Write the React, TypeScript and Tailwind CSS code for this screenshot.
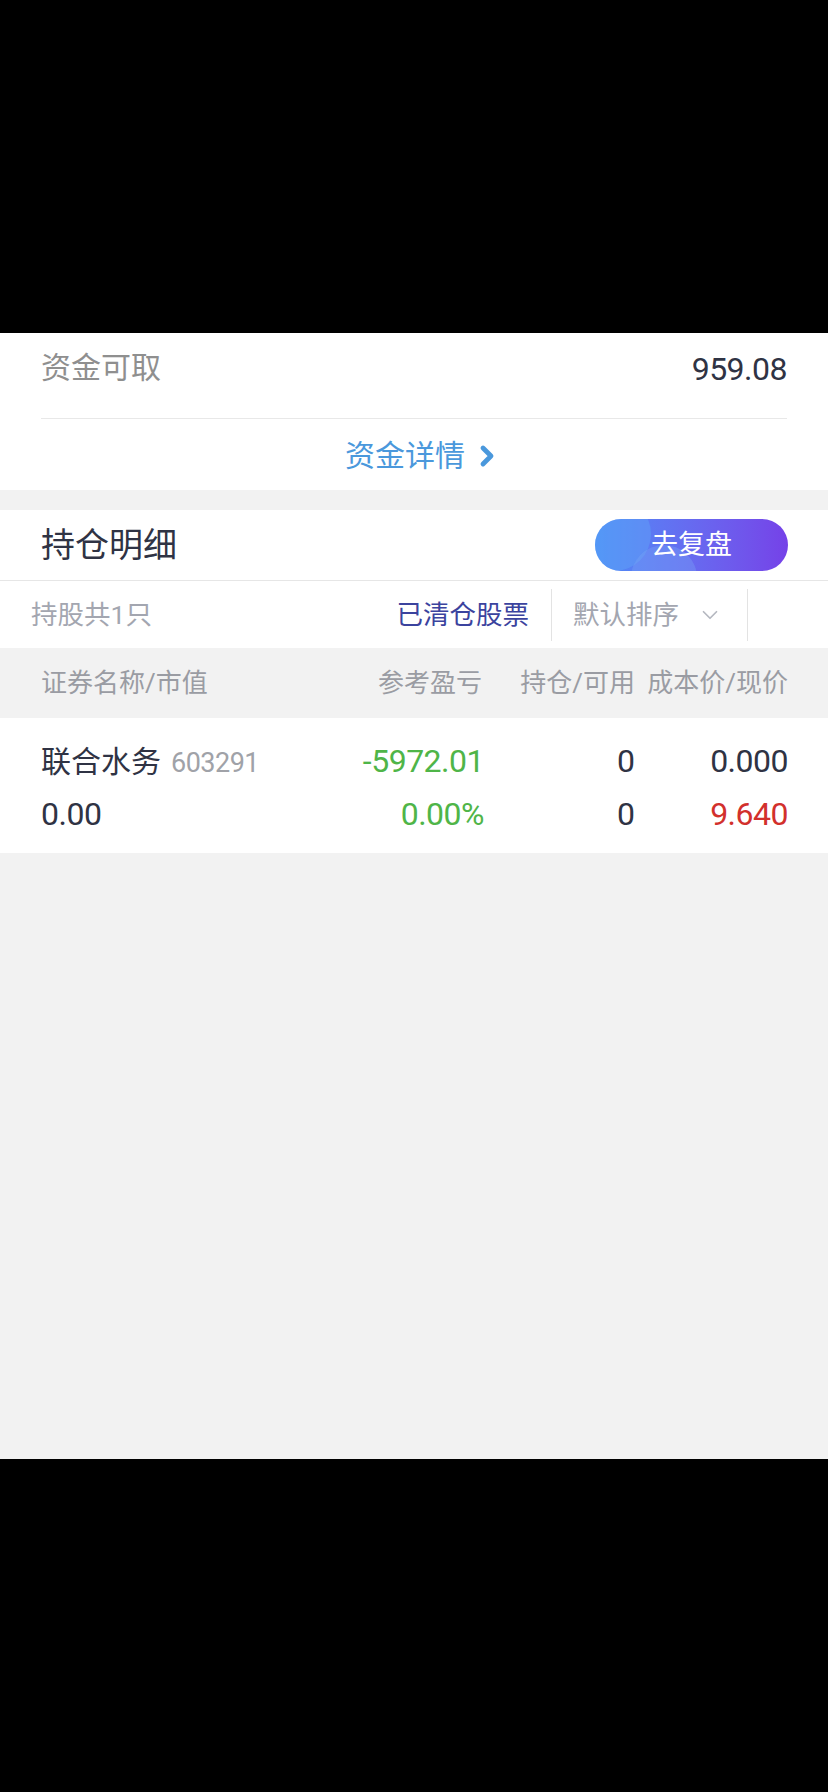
import { ChevronRight, ChevronDown } from 'lucide-react';

const FONT = { fontFamily: '"Roboto", "Noto Sans CJK SC", sans-serif' };

export default function App() {
  return (
    <div className="w-[828px] h-[1792px] bg-black flex flex-col" style={FONT}>
      <div className="h-[333px] shrink-0 bg-black" />

      <main className="h-[1126px] shrink-0 bg-[#f2f2f2] flex flex-col">
        {/* funds */}
        <section className="bg-white px-[41px]">
          <div className="h-[86px] flex items-start pt-[12px] justify-between border-b border-[#e8e8e8]">
            <span className="text-[30px] text-[#8f8f8f]">资金可取</span>
            <span className="text-[32px] text-[#2f3344] tracking-[-0.5px]">959.08</span>
          </div>
          <div className="h-[71px] flex items-center justify-center text-[#4a98dc] pt-[2px] pl-[20px]">
            <span className="text-[30px]">资金详情</span>
            <ChevronRight size={32} strokeWidth={3.6} className="ml-[6px]" />
          </div>
        </section>

        {/* holdings header */}
        <section className="mt-[20px] bg-white">
          <div className="h-[71px] pl-[41px] pr-[40px] flex items-center justify-between border-b border-[#e6e6e6]">
            <h2 className="text-[34px] text-[#2f3344]">持仓明细</h2>
            <button className="relative overflow-hidden w-[193px] h-[52px] rounded-full bg-gradient-to-r from-[#4a8cf7] to-[#7541e8] text-white text-[27px]">
              <span className="absolute -left-[18px] -top-[22px] w-[74px] h-[74px] rounded-full bg-[#62a9f8] opacity-40" />
              <span className="absolute left-[36px] top-[26px] w-[66px] h-[66px] rounded-full bg-[#7aa6f7] opacity-35" />
              <span className="relative">去复盘</span>
            </button>
          </div>

          <div className="h-[67px] flex items-center pl-[31px]">
            <span className="text-[26.5px] text-[#a3a6b0] flex-1">持股共1只</span>
            <span className="text-[26.5px] text-[#3b439e] pr-[22px]">已清仓股票</span>
            <div className="w-px h-[52px] bg-[#e3e3e3]" />
            <div className="w-[195px] flex items-center pl-[21px] text-[#a3a6b0]">
              <span className="text-[26.5px]">默认排序</span>
              <ChevronDown size={26} strokeWidth={1.6} className="ml-[18px] text-[#b5b8c0]" />
            </div>
            <div className="w-px h-[52px] bg-[#e3e3e3]" />
            <div className="w-[80px]" />
          </div>
        </section>

        {/* table header */}
        <div className="h-[70px] flex items-center pl-[41px] pr-[40px] text-[26px] text-[#9a9ca3]">
          <span className="flex-1">证券名称/市值</span>
          <span className="w-[110px] text-right">参考盈亏</span>
          <span className="w-[153px] text-right">持仓/可用</span>
          <span className="w-[153px] text-right">成本价/现价</span>
        </div>

        {/* row */}
        <div className="h-[135px] bg-white pl-[41px] pr-[40px] flex flex-col justify-center gap-[13px] pt-[4px]">
          <div className="flex items-center h-[40px]">
            <div className="flex-1 flex items-baseline">
              <span className="text-[30px] text-[#2f3344]">联合水务</span>
              <span className="text-[27px] text-[#a0a2a8] ml-[10px] tracking-[-0.5px]">603291</span>
            </div>
            <span className="w-[150px] text-right text-[32px] text-[#4fb548] tracking-[-0.5px]">-5972.01</span>
            <span className="w-[151px] text-right text-[32px] text-[#2f3344]">0</span>
            <span className="w-[153px] text-right text-[32px] text-[#2f3344] tracking-[-0.5px]">0.000</span>
          </div>
          <div className="flex items-center h-[40px]">
            <span className="flex-1 text-[32px] text-[#2f3344] tracking-[-0.5px]">0.00</span>
            <span className="w-[150px] text-right text-[32px] text-[#4fb548] tracking-[-0.5px]">0.00%</span>
            <span className="w-[151px] text-right text-[32px] text-[#2f3344]">0</span>
            <span className="w-[153px] text-right text-[32px] text-[#d2302c] tracking-[-0.5px]">9.640</span>
          </div>
        </div>
      </main>

      <div className="flex-1 bg-black" />
    </div>
  );
}
